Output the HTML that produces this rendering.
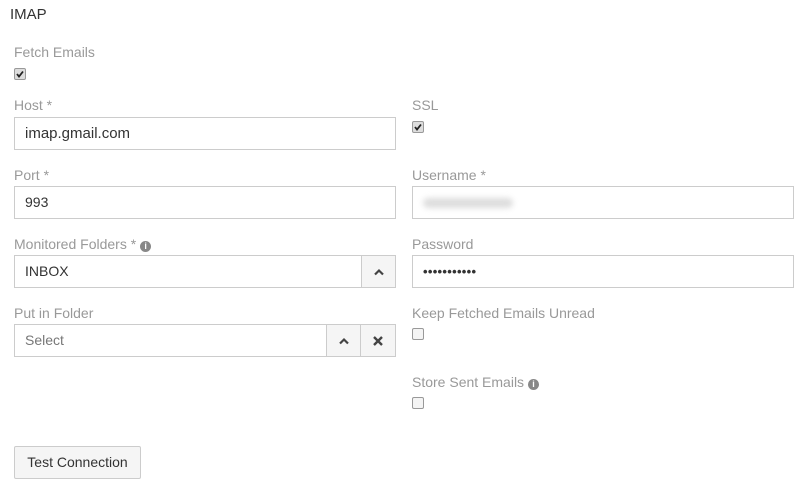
<!DOCTYPE html>
<html><head><style>
body{margin:0;width:805px;height:492px;background:#fff;font-family:"Liberation Sans",sans-serif;font-size:14px;color:#333;position:relative;overflow:hidden}
.a{position:absolute}
.lbl{position:absolute;color:#999;font-size:14px;line-height:16px}
.inp{position:absolute;height:31px;border:1px solid #ccc;background:#fff;line-height:31px;padding-left:10px;box-sizing:content-box;color:#333}
.cb{position:absolute;width:10px;height:10px;border:1px solid #999;border-radius:2px;background:#ddd}
.cb.un{background:#f4f4f4}
.btn{position:absolute;top:0;height:31px;width:33px;border-left:1px solid #ccc;background:#f5f5f5}
.btn svg{position:absolute;left:50%;top:50%;transform:translate(-50%,-50%)}
.info{display:inline-block;width:11px;height:11px;border-radius:50%;background:#888;color:#fff;font-size:9px;line-height:11px;text-align:center;font-weight:bold;vertical-align:0px;margin-left:4px}
</style></head><body>
<div class="a" style="left:10px;top:6px;font-size:15px;color:#333">IMAP</div>
<div class="lbl" style="left:14px;top:44px">Fetch Emails</div>
<div class="cb" style="left:14px;top:68px"><svg width="10" height="10" style="position:absolute;left:0;top:0"><path d="M2 5l2 2.5 4-5" stroke="#222" stroke-width="1.8" fill="none"/></svg></div>

<div class="lbl" style="left:14px;top:97px">Host *</div>
<div class="inp" style="left:14px;top:117px;width:370px;font-size:15px">imap.gmail.com</div>
<div class="lbl" style="left:412px;top:97px">SSL</div>
<div class="cb" style="left:412px;top:121px"><svg width="10" height="10" style="position:absolute;left:0;top:0"><path d="M2 5l2 2.5 4-5" stroke="#222" stroke-width="1.8" fill="none"/></svg></div>

<div class="lbl" style="left:14px;top:167px">Port *</div>
<div class="inp" style="left:14px;top:186px;width:370px">993</div>
<div class="lbl" style="left:412px;top:167px">Username *</div>
<div class="inp" style="left:412px;top:186px;width:370px"><div style="position:absolute;left:10px;top:11px;width:90px;height:10px;background:#ddd;border-radius:5px;filter:blur(3px)"></div></div>

<div class="lbl" style="left:14px;top:236px">Monitored Folders *<span class="info">i</span></div>
<div class="inp" style="left:14px;top:255px;width:370px">INBOX<div class="btn" style="right:0"><svg width="10" height="7"><path d="M1 6l4-4 4 4" stroke="#444" stroke-width="2.2" fill="none"/></svg></div></div>
<div class="lbl" style="left:412px;top:236px">Password</div>
<div class="inp" style="left:412px;top:255px;width:370px;font-size:13px;font-weight:bold;letter-spacing:0.3px">•••••••••••</div>

<div class="lbl" style="left:14px;top:305px">Put in Folder</div>
<div class="inp" style="left:14px;top:324px;width:370px;color:#777">Select<div class="btn" style="right:35px"><svg width="10" height="7"><path d="M1 6l4-4 4 4" stroke="#444" stroke-width="2.2" fill="none"/></svg></div><div class="btn" style="right:0;width:34px"><svg width="11" height="11"><path d="M1.5 1.5l8 8M9.5 1.5l-8 8" stroke="#444" stroke-width="2.4"/></svg></div></div>
<div class="lbl" style="left:412px;top:305px">Keep Fetched Emails Unread</div>
<div class="cb un" style="left:412px;top:328px"></div>

<div class="lbl" style="left:412px;top:374px">Store Sent Emails<span class="info">i</span></div>
<div class="cb un" style="left:412px;top:397px"></div>

<div class="a" style="left:14px;top:446px;width:125px;height:31px;border:1px solid #ccc;background:#f5f5f5;border-radius:2px;line-height:31px;text-align:center;color:#333">Test Connection</div>
</body></html>
